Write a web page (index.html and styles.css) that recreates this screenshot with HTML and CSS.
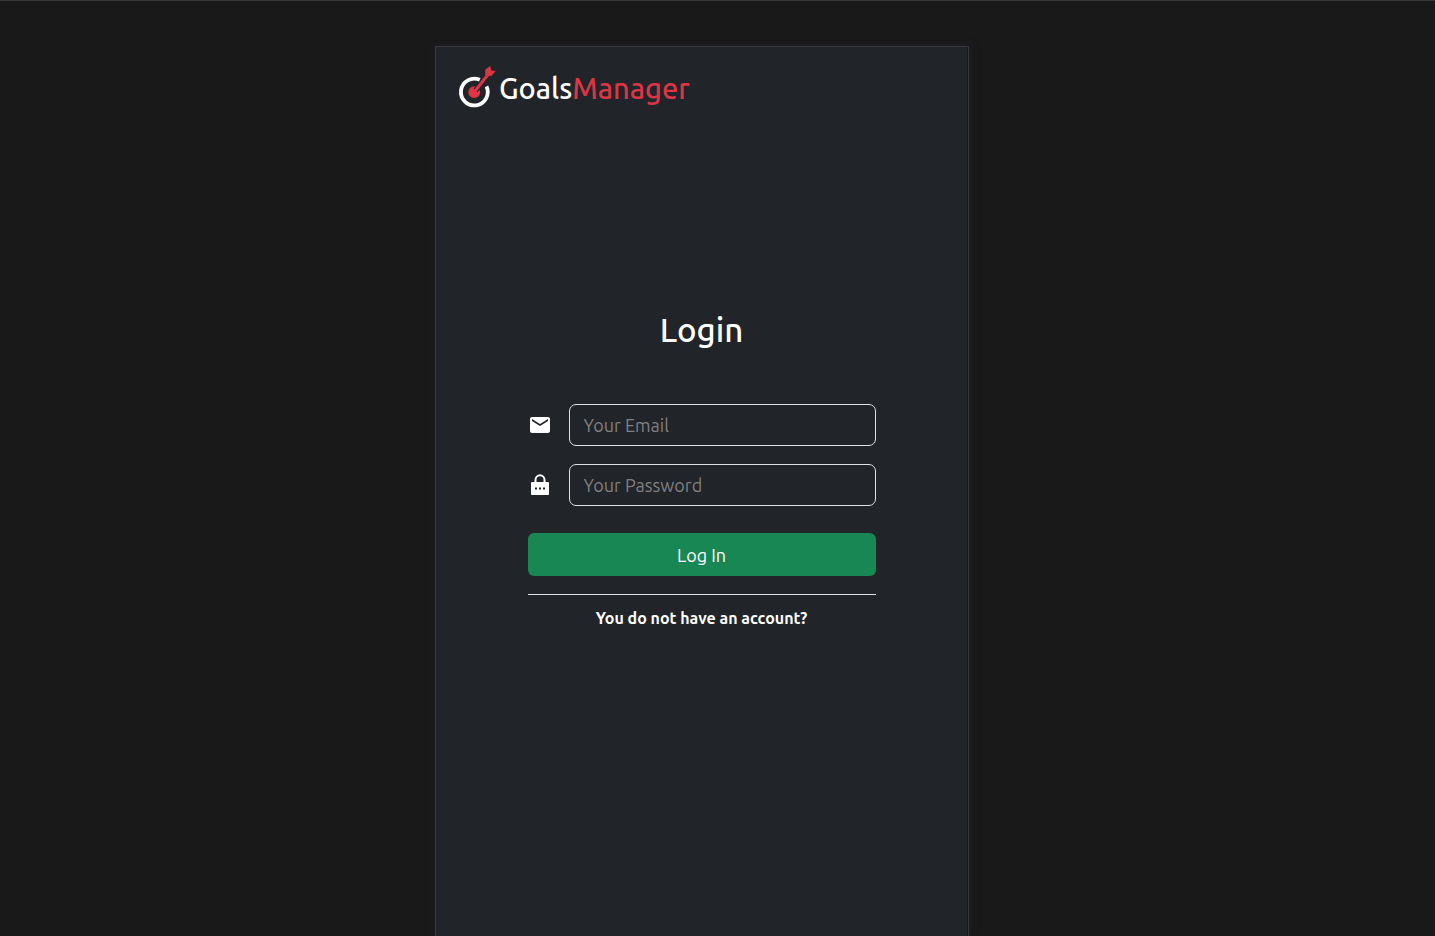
FILE: index.html
```html
<!DOCTYPE html>
<html lang="en">
<head>
<meta charset="utf-8">
<meta name="viewport" content="width=device-width, initial-scale=1">
<title>GoalsManager</title>
<link rel="stylesheet" href="styles.css">
</head>
<body>
<main class="page">
  <div class="card">
    <div class="panel">
      <header class="brand">
        <svg class="brand-mark" viewBox="0 0 40 44" width="40" height="44" aria-hidden="true">
          <path d="M21.8 13.8A13.4 13.4 0 1 0 28.5 20.4" fill="none" stroke="#fff" stroke-width="3.800"/>
          <circle cx="16.200" cy="26.200" r="5.900" fill="#dc3545"/>
          <path d="M17.500 24.500L24 17" stroke="#212429" stroke-width="5"/>
          <path d="M15.500 27L30.500 8" stroke="#dc3545" stroke-width="3"/>
          <path d="M27.200 3.800L32.200 0L33.300 4.400L37.700 5L33.600 9.800L28.600 10.200L27.200 8.500Z" fill="#dc3545"/>
        </svg>
        <span class="brand-name">Goals<span class="brand-accent">Manager</span></span>
      </header>
      <form class="login">
        <h1 class="title">Login</h1>
        <div class="field">
          <label class="field-icon" for="email" aria-label="Email">
            <svg viewBox="0 0 24 24" width="24" height="24" fill="#fff" aria-hidden="true"><path d="M20 4H4c-1.100 0-1.990.9-1.990 2L2 18c0 1.100.9 2 2 2h16c1.100 0 2-.9 2-2V6c0-1.100-.9-2-2-2zm0 4l-8 5-8-5V6l8 5 8-5v2z"/></svg>
          </label>
          <input class="input" id="email" type="email" placeholder="Your Email">
        </div>
        <div class="field">
          <label class="field-icon" for="password" aria-label="Password">
            <svg viewBox="0 0 24 24" width="24" height="24" aria-hidden="true"><path d="M7.500 10V6.800a4.500 4.500 0 0 1 9 0V10" fill="none" stroke="#fff" stroke-width="2"/><rect x="3" y="9" width="18" height="13" rx="1" fill="#fff"/><path d="M7 14.500h2v2H7zM11 14.500h2v2h-2zM15 14.500h2v2h-2z" fill="#212429"/></svg>
          </label>
          <input class="input" id="password" type="password" placeholder="Your Password">
        </div>
        <button class="submit" type="submit">Log In</button>
        <div class="signup"><a class="signup-link" href="#">You do not have an account?</a></div>
      </form>
    </div>
  </div>
</main>
</body>
</html>
```
FILE: styles.css
```css
* { box-sizing: border-box; }

body {
  margin: 0;
  background: #19191a;
  color: #fff;
  font-family: Ubuntu, "Noto Sans", sans-serif;
}

.page {
  display: flex;
  justify-content: center;
  min-height: 100vh;
  padding: 45px 31px 0 0;
  border-top: 1px solid #353638;
}

.card {
  display: flex;
  width: 100%;
  max-width: 534px;
  padding-right: 1px;
  border: 1px solid #37383b;
  border-bottom: 0;
  box-shadow: 0 0 8px #212124;
}

.panel {
  flex: 1;
  padding: 19px 22px;
  background: #212429;
}

.brand {
  display: flex;
  align-items: center;
  gap: 1px;
}

.brand-name {
  font-size: 29px;
  font-weight: 500;
  line-height: 44px;
}

.brand-accent { color: #dc3545; }

.login {
  display: flex;
  flex-direction: column;
  gap: 18px;
  max-width: 348px;
  margin: 199px auto 0;
}

.title {
  margin: 0 0 35px;
  font-size: 33px;
  font-weight: 500;
  line-height: 42px;
  text-align: center;
}

.field {
  display: flex;
  align-items: center;
  gap: 17px;
}

.field-icon,
.brand-mark,
.field-icon svg { display: block; }

.input {
  flex: 1;
  min-width: 0;
  height: 42px;
  padding: 0 14px;
  border: 1px solid #dee2e6;
  border-radius: 7px;
  background: transparent;
  color: #fff;
  font: inherit;
  font-size: 18px;
}

.input::placeholder { color: #808080; opacity: 1; }

.submit {
  height: 43px;
  margin-top: 9px;
  border: 0;
  border-radius: 6px;
  background: #198754;
  color: #fff;
  font: inherit;
  font-size: 18px;
}

.signup {
  padding-top: 11px;
  border-top: 1px solid #dee2e6;
  text-align: center;
}

.signup-link {
  color: #fff;
  font-size: 16px;
  font-weight: 700;
  line-height: 24px;
  text-decoration: none;
}
```
